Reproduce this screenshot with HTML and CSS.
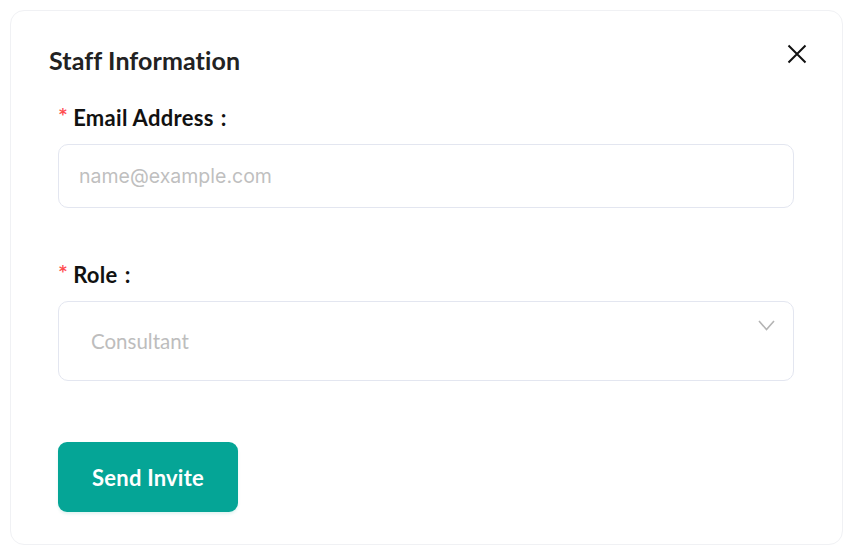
FILE: index.html
```html
<!DOCTYPE html>
<html lang="en">
<head>
<meta charset="utf-8">
<title>Staff Information</title>
<link rel="stylesheet" href="styles.css">
</head>
<body>
<div class="card">
  <div class="header">
    <h2 class="title">Staff Information</h2>
    <button class="close" aria-label="Close">
      <svg width="20" height="20" viewBox="0 0 20 20"><path d="M1.5 1.5 L18.5 18.5 M18.5 1.5 L1.5 18.5" stroke="#111" stroke-width="2" fill="none"/></svg>
    </button>
  </div>
  <form class="form">
    <div class="field">
      <label class="label"><span class="req">*</span>Email Address<span class="colon">:</span></label>
      <input class="input" type="text" placeholder="name@example.com">
    </div>
    <div class="field role">
      <label class="label"><span class="req">*</span>Role<span class="colon">:</span></label>
      <div class="select">
        <span class="select-value">Consultant</span>
        <svg class="chevron" width="17" height="11" viewBox="0 0 17 11"><path d="M1 1 L8.5 9.5 L16 1" stroke="#b4b4b4" stroke-width="1.6" fill="none"/></svg>
      </div>
    </div>
    <button class="btn" type="button">Send Invite</button>
  </form>
</div>
</body>
</html>
```

FILE: styles.css
```css
* { box-sizing: border-box; }
html, body { margin: 0; padding: 0; background: #fff; }
body {
  padding: 10px 17px 16px 10px;
  font-family: "Lato", "Open Sans", sans-serif;
  color: #1a1a1a;
}
.card {
  border: 1px solid #f0f1f4;
  border-radius: 14px;
  height: 535px;
  padding: 33px 35px 32px 38px;
  background: #fff;
}
.header {
  display: flex;
  justify-content: space-between;
  align-items: flex-start;
}
.title {
  margin: 0;
  font-size: 25px;
  line-height: 32px;
  font-weight: 700;
  color: #222;
  letter-spacing: 0.1px;
}
.close {
  background: none;
  border: 0;
  padding: 0;
  margin-top: 0;
  width: 20px;
  height: 20px;
  cursor: pointer;
}
.close svg { display: block; }
.form {
  margin: 28px 13px 0 9px;
}
.field { display: flex; flex-direction: column; }
.label {
  font-size: 22px;
  line-height: 28px;
  font-weight: 700;
  color: #111;
  margin-bottom: 12px;
  display: flex;
  align-items: flex-start;
  letter-spacing: 0.3px;
}
.req {
  color: #ff4d4f;
  font-family: "DejaVu Sans", sans-serif;
  font-size: 15px;
  font-weight: 700;
  line-height: 16px;
  margin: 3px 6px 0 1px;
}
.colon { margin-left: 7px; }
.input {
  height: 64px;
  border: 1px solid #e3e6f0;
  border-radius: 10px;
  padding: 0 20px;
  font-family: "Inter", "Lato", sans-serif;
  font-size: 19.5px;
  color: #333;
  outline: none;
}
.input::placeholder { color: #bfbfbf; }
.role { margin-top: 53px; }
.role .label { margin-bottom: 12px; }
.select {
  position: relative;
  height: 80px;
  border: 1px solid #e3e6f0;
  border-radius: 10px;
  padding: 0 32px;
  display: flex;
  align-items: center;
}
.select-value {
  font-size: 20.5px;
  color: #bdbdbd;
}
.chevron {
  position: absolute;
  right: 18px;
  top: 18px;
}
.btn {
  margin-top: 61px;
  width: 180px;
  height: 70px;
  border: 0;
  border-radius: 9px;
  background: #05a596;
  color: #fff;
  font-family: inherit;
  font-size: 22px;
  font-weight: 700;
  letter-spacing: 0.2px;
  box-shadow: 0 2px 3px rgba(5, 165, 150, 0.12);
  cursor: pointer;
}
```
